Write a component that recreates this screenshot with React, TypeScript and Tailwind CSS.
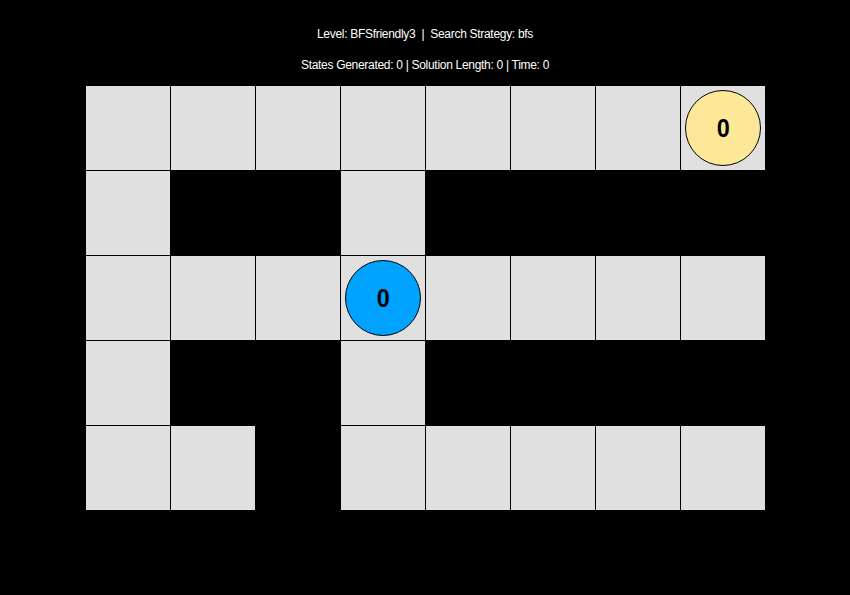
const walls = [
  "00000000",
  "01101111",
  "00000000",
  "01101111",
  "00100000",
];

type Agent = { row: number; col: number; color: string; label: string };

const agents: Agent[] = [
  { row: 0, col: 7, color: "bg-[#fce898]", label: "0" },
  { row: 2, col: 3, color: "bg-[#00a2ff]", label: "0" },
];

const font = { fontFamily: '"Liberation Sans Narrow", "Liberation Sans", Arial, sans-serif' };

export default function App() {
  return (
    <div className="w-[850px] h-[595px] bg-black text-white flex flex-col items-center" style={font}>
      {/* Header: level + stats */}
      <div className="pt-[26px] text-[12px] leading-[16px] tracking-[-0.3px] whitespace-pre">Level: BFSfriendly3  |  Search Strategy: bfs</div>
      <div className="pt-[15px] text-[12px] leading-[16px] tracking-[-0.3px]">States Generated: 0 | Solution Length: 0 | Time: 0</div>

      <div className="mt-[12px] grid grid-cols-[repeat(8,85px)] grid-rows-[repeat(5,85px)]">
        {walls.map((row, r) =>
          row.split("").map((c, ci) => {
            const agent = agents.find((a) => a.row === r && a.col === ci);
            return (
              <div
                key={`${r}-${ci}`}
                className={
                  c === "1"
                    ? "bg-black"
                    : "bg-[#e0e0e0] border-l border-t border-black flex items-center justify-center"
                }
              >
                {agent && (
                  <div
                    className={`w-[76px] h-[76px] rounded-full border border-black flex items-center justify-center text-black font-bold text-[26px] ${agent.color}`}
                  >
                    <span className="inline-block scale-x-[0.9]">{agent.label}</span>
                  </div>
                )}
              </div>
            );
          })
        )}
      </div>
    </div>
  );
}
